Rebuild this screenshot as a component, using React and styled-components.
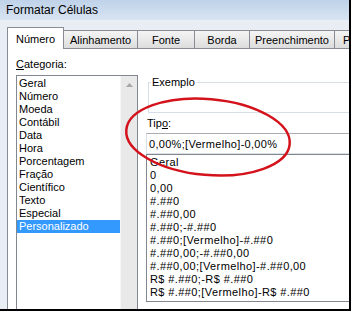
import React from "react";
import styled, { createGlobalStyle } from "styled-components";

const GlobalStyle = createGlobalStyle`
  html, body {
    margin: 0;
    padding: 0;
    background: #fff;
  }
  body {
    font-family: "Liberation Sans", Arial, sans-serif;
    font-size: 11px;
    color: #000;
  }
`;

const Window = styled.div`
  position: relative;
  width: 351px;
  height: 311px;
  box-sizing: border-box;
  border-right: 2px solid #000;
  border-bottom: 2px solid #000;
  background: #e9eef5;
  overflow: hidden;
  display: flex;
  flex-direction: column;
`;

const TitleBar = styled.div`
  height: 20px;
  padding-left: 6px;
  display: flex;
  align-items: center;
  font-size: 12px;
  background: linear-gradient(#bfd2e9, #d8e4f2);
`;

const Body = styled.div`
  flex: 1;
  min-height: 0;
  padding: 7px 0 0 7px;
  display: flex;
  flex-direction: column;
`;

const TabStrip = styled.div`
  height: 21px;
  display: flex;
  align-items: flex-end;
  position: relative;
  z-index: 2;
`;

const Tab = styled.div`
  box-sizing: border-box;
  flex: none;
  width: ${(p) => p.$width}px;
  height: ${(p) => (p.$active ? 22 : 18)}px;
  margin-bottom: ${(p) => (p.$active ? -1 : 0)}px;
  margin-left: ${(p) => (p.$first ? 0 : -1)}px;
  border: 1px solid #898c95;
  border-bottom: none;
  background: ${(p) =>
    p.$active ? "#fff" : "linear-gradient(#f4f4f4, #e9e9e9 50%, #dcdcdc)"};
  display: flex;
  align-items: center;
  justify-content: ${(p) => (p.$start ? "flex-start" : "center")};
  padding-left: ${(p) => (p.$start ? 8 : 0)}px;
  white-space: nowrap;
  overflow: hidden;
  padding-top: ${(p) => (p.$active ? 1 : 0)}px;
  position: relative;
  z-index: ${(p) => (p.$active ? 2 : 1)};
`;

const Panel = styled.div`
  flex: 1;
  min-height: 0;
  background: #fff;
  border-top: 1px solid #898c95;
  border-left: 1px solid #898c95;
  padding: 9px 0 0 8px;
  display: flex;
  gap: 8px;
  overflow: hidden;
`;

const LeftColumn = styled.div`
  width: 122px;
  flex: none;
  display: flex;
  flex-direction: column;
`;

const RightColumn = styled.div`
  width: 240px;
  flex: none;
  display: flex;
  flex-direction: column;
  padding-top: 24px;
`;

const Label = styled.div`
  line-height: 13px;
  height: 13px;
  margin-left: ${(p) => p.$indent || 0}px;
  margin-top: ${(p) => p.$top || 0}px;

  u {
    text-decoration: underline;
    text-underline-offset: 1px;
  }
`;

const ListBox = styled.div`
  flex: 1;
  display: flex;
  border: 1px solid #828790;
  margin-top: 4px;
  min-height: 260px;
`;

const Items = styled.div`
  flex: 1;
  padding-top: 1px;
`;

const Item = styled.div`
  height: 13px;
  line-height: 13px;
  padding-left: ${(p) => p.$pad || 2}px;
  white-space: nowrap;
  background: ${(p) => (p.$selected ? "#3399ff" : "transparent")};
  color: ${(p) => (p.$selected ? "#fff" : "#000")};
  letter-spacing: ${(p) => p.$spacing || 0}px;
`;

const ScrollBar = styled.div`
  width: 17px;
  flex: none;
  background: #e9e9e9;
  border-left: 1px solid #f6f6f6;
  box-sizing: border-box;
  display: flex;
  flex-direction: column;
  align-items: center;
`;

const ScrollButton = styled.div`
  height: 17px;
  width: 100%;
  display: flex;
  align-items: center;
  justify-content: center;
`;

const GroupBox = styled.div`
  margin-left: 2px;
  height: 31px;
  box-sizing: border-box;
  border: 1px solid #d5dfe5;
  border-right: none;
`;

const Legend = styled.div`
  width: fit-content;
  margin: -7px 0 0 2px;
  padding: 0 1px;
  line-height: 13px;
  background: #fff;
`;

const TypeInput = styled.div`
  margin-top: 3px;
  height: 21px;
  box-sizing: border-box;
  border: 1px solid #dbdfe6;
  border-top-color: #abadb3;
  border-right: none;
  padding-left: 2px;
  display: flex;
  align-items: center;
  white-space: nowrap;
  letter-spacing: 0.3px;
`;

const TypeList = styled.div`
  height: 148px;
  box-sizing: border-box;
  border: 1px solid #828790;
  border-right: none;
  padding-top: 1px;
`;

const Marker = styled.svg`
  position: absolute;
  left: 0;
  top: 0;
  pointer-events: none;
`;

const tabs = [
  { label: "Número", width: 57, active: true },
  { label: "Alinhamento", width: 75 },
  { label: "Fonte", width: 58 },
  { label: "Borda", width: 56 },
  { label: "Preenchimento", width: 86 },
  { label: "Proteção", width: 40, start: true },
];

const categories = [
  "Geral",
  "Número",
  "Moeda",
  "Contábil",
  "Data",
  "Hora",
  "Porcentagem",
  "Fração",
  "Científico",
  "Texto",
  "Especial",
  "Personalizado",
];

const formats = [
  "Geral",
  "0",
  "0,00",
  "#.##0",
  "#.##0,00",
  "#.##0;-#.##0",
  "#.##0;[Vermelho]-#.##0",
  "#.##0,00;-#.##0,00",
  "#.##0,00;[Vermelho]-#.##0,00",
  "R$ #.##0;-R$ #.##0",
  "R$ #.##0;[Vermelho]-R$ #.##0",
];

function App() {
  return (
    <>
      <GlobalStyle />
      <Window>
        <TitleBar>Formatar Células</TitleBar>
        <Body>
          <TabStrip>
            {tabs.map((t, i) => (
              <Tab
                key={t.label}
                $width={t.width}
                $active={t.active}
                $start={t.start}
                $first={i === 0}
              >
                {t.label}
              </Tab>
            ))}
          </TabStrip>
          <Panel>
            <LeftColumn>
              <Label>
                <u>C</u>ategoria:
              </Label>
              <ListBox>
                <Items>
                  {categories.map((c) => (
                    <Item key={c} $selected={c === "Personalizado"}>
                      {c}
                    </Item>
                  ))}
                </Items>
                <ScrollBar>
                  <ScrollButton>
                    <svg width="7" height="4" viewBox="0 0 7 4">
                      <path d="M0 4 L3.5 0 L7 4 Z" fill="#a7a7a7" />
                    </svg>
                  </ScrollButton>
                </ScrollBar>
              </ListBox>
            </LeftColumn>
            <RightColumn>
              <GroupBox>
                <Legend>Exemplo</Legend>
              </GroupBox>
              <Label $indent={1} $top={4}>
                Tip<u>o</u>:
              </Label>
              <TypeInput>0,00%;[Vermelho]-0,00%</TypeInput>
              <TypeList>
                {formats.map((f) => (
                  <Item key={f} $pad={3} $spacing={0.4}>
                    {f}
                  </Item>
                ))}
              </TypeList>
            </RightColumn>
          </Panel>
        </Body>
        <Marker width="351" height="311" viewBox="0 0 351 311">
          <ellipse
            cx="208"
            cy="137"
            rx="82"
            ry="38"
            transform="rotate(5 208 137)"
            fill="none"
            stroke="#d3121b"
            strokeWidth="2.5"
          />
        </Marker>
      </Window>
    </>
  );
}

export default App;
